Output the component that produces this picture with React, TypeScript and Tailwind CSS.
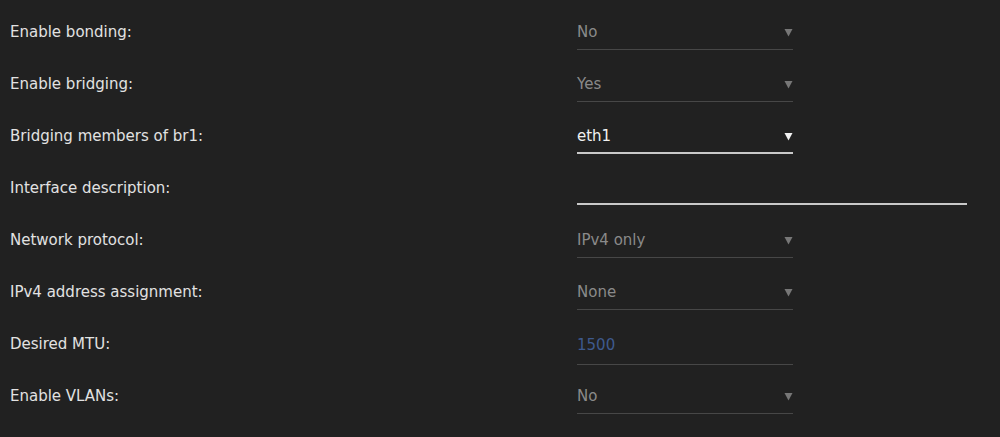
import React from "react";

type Field =
  | { kind: "select"; value: string; active?: boolean }
  | { kind: "text"; value: string }
  | { kind: "number"; value: string };

const rows: { label: string; field: Field }[] = [
  { label: "Enable bonding:", field: { kind: "select", value: "No" } },
  { label: "Enable bridging:", field: { kind: "select", value: "Yes" } },
  { label: "Bridging members of br1:", field: { kind: "select", value: "eth1", active: true } },
  { label: "Interface description:", field: { kind: "text", value: "" } },
  { label: "Network protocol:", field: { kind: "select", value: "IPv4 only" } },
  { label: "IPv4 address assignment:", field: { kind: "select", value: "None" } },
  { label: "Desired MTU:", field: { kind: "number", value: "1500" } },
  { label: "Enable VLANs:", field: { kind: "select", value: "No" } },
];

function Caret({ light }: { light?: boolean }) {
  return (
    <svg width="9" height="9" viewBox="0 0 9 9" className="shrink-0">
      <path d="M0.5 1 L8.5 1 L4.5 8.5 Z" fill={light ? "#f2f2f2" : "#777777"} />
    </svg>
  );
}

function FieldView({ field }: { field: Field }) {
  if (field.kind === "select") {
    return field.active ? (
      <div className="mt-[14px] flex w-[216px] items-center justify-between border-b-2 border-[#c9c9c9] pt-[8px] pb-[6px]">
        <span className="leading-[20px] text-[#f0f0f0]">{field.value}</span>
        <Caret light />
      </div>
    ) : (
      <div className="mt-[14px] flex w-[216px] items-center justify-between border-b border-[#474747] pt-[8px] pb-[7px]">
        <span className="leading-[20px] text-[#8a8a8a]">{field.value}</span>
        <Caret />
      </div>
    );
  }
  if (field.kind === "text") {
    return (
      <div className="mt-[13px] w-[390px] border-b-2 border-[#c9c9c9] pt-[8px] pb-[6px]">
        <span className="block h-[20px] leading-[20px] text-[#f0f0f0]">{field.value}</span>
      </div>
    );
  }
  return (
    <div className="mt-[14px] w-[216px] border-b border-[#474747] pt-[8px] pb-[7px]">
      <span className="leading-[20px] text-[#3e5a8e]">{field.value}</span>
    </div>
  );
}

export default function App() {
  return (
    <div
      className="min-h-[437px] w-full bg-[#212121] pl-[10px] text-[15px] text-[#e2e2e2]"
      style={{ fontFamily: '"DejaVu Sans", Verdana, sans-serif' }}
    >
      {rows.map((r) => (
        <div key={r.label} className="grid h-[52px] grid-cols-[567px_1fr] items-start">
          <div className="pt-[22px] leading-[20px]">{r.label}</div>
          <FieldView field={r.field} />
        </div>
      ))}
    </div>
  );
}
